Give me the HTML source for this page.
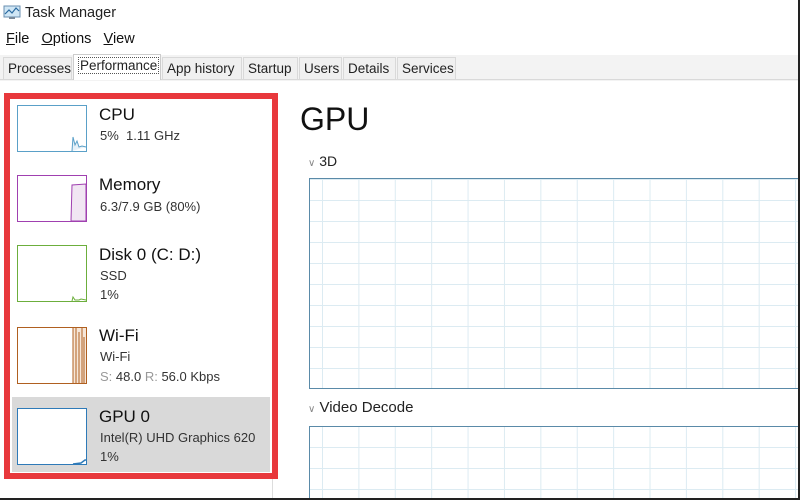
<!DOCTYPE html>
<html><head><style>
*{margin:0;padding:0;box-sizing:border-box}
html,body{width:800px;height:500px;overflow:hidden}
body{background:#fff;font-family:"Liberation Sans",sans-serif;color:#000;position:relative}
.a{position:absolute;white-space:nowrap}
.tab{position:absolute;top:57px;height:22px;font-size:13.5px;line-height:21px;border:1px solid #d9d9d9;border-bottom:none;background:#f0f0f0;padding:0 4px;color:#222}
.th{position:absolute;left:17px;width:70px;background:#fff}
.t1{font-size:17px;color:#111}
.t2{font-size:13px;color:#333}
</style></head><body>
<svg class="a" style="left:3px;top:5px" width="20" height="16"><rect x="1" y="1" width="16" height="11" fill="#cfe6f5" stroke="#6a8fb0"/><polyline points="2,9 6,5 9,8 13,3 16,6" fill="none" stroke="#2a6aa0" stroke-width="1.2"/><rect x="6" y="12" width="6" height="2" fill="#7a8a9a"/></svg>
<div class="a" style="left:25px;top:5px;font-size:14.5px;color:#222">Task Manager</div>
<div class="a" style="left:6px;top:31px;font-size:14.5px;color:#111"><u>F</u>ile&nbsp;&nbsp; <u>O</u>ptions&nbsp;&nbsp; <u>V</u>iew</div>
<div class="a" style="left:0;top:55px;width:800px;height:26px;background:#f3f3f3"></div>
<div class="a" style="left:0;top:79px;width:800px;height:1px;background:#d9d9d9"></div>
<div class="tab" style="left:3px;width:69px">Processes</div>
<div class="tab" style="left:73px;top:54px;height:26px;width:88px;background:#fff;border-color:#ccc"><span style="border:1px dotted #555;padding:0 1px">Performance</span></div>
<div class="tab" style="left:162px;width:80px">App history</div>
<div class="tab" style="left:243px;width:55px">Startup</div>
<div class="tab" style="left:299px;width:43px">Users</div>
<div class="tab" style="left:343px;width:53px">Details</div>
<div class="tab" style="left:397px;width:59px">Services</div>

<div class="a" style="left:272px;top:93px;width:1px;height:407px;background:#ddd"></div>
<div class="a" style="left:4px;top:93px;width:274px;height:386px;border:6px solid #e8383c"></div>
<div class="a" style="left:12px;top:397px;width:258px;height:75px;background:#d9d9d9"></div>

<svg class="a th" style="top:105px" width="70" height="47"><rect x=".5" y=".5" width="69" height="46" fill="#fff" stroke="#5aa0c8"/><polyline points="55,46 56,32 58,40 60,36 62,42 65,41 69,42" fill="#e6f1f8" stroke="#5aa0c8"/></svg>
<div class="a t1" style="left:99px;top:105px">CPU</div>
<div class="a t2" style="left:100px;top:128px">5%&nbsp; 1.11 GHz</div>

<svg class="a th" style="top:175px" width="70" height="47"><rect x=".5" y=".5" width="69" height="46" fill="#fff" stroke="#a040b0"/><polygon points="54,46 55,10 69,9 69,46" fill="#f1e6f3" stroke="#a040b0"/></svg>
<div class="a t1" style="left:99px;top:175px">Memory</div>
<div class="a t2" style="left:100px;top:199px">6.3/7.9 GB (80%)</div>

<svg class="a th" style="top:245px" width="70" height="57"><rect x=".5" y=".5" width="69" height="56" fill="#fff" stroke="#6cae3c"/><polyline points="55,56 56,52 58,55 62,55 64,54 69,55" fill="none" stroke="#6cae3c"/></svg>
<div class="a t1" style="left:99px;top:245px">Disk 0 (C: D:)</div>
<div class="a t2" style="left:100px;top:268px">SSD</div>
<div class="a t2" style="left:100px;top:287px">1%</div>

<svg class="a th" style="top:327px" width="70" height="57"><rect x=".5" y=".5" width="69" height="56" fill="#fff" stroke="#b06020"/><rect x="56" y="1" width="13" height="55" fill="#f6e6d8"/><path d="M56 56V1M59 56V1M62 56V5M65 56V1M67 56V10" stroke="#b06020" stroke-width="1" fill="none"/></svg>
<div class="a t1" style="left:99px;top:326px">Wi-Fi</div>
<div class="a t2" style="left:100px;top:349px">Wi-Fi</div>
<div class="a t2" style="left:100px;top:369px"><span style="color:#999">S:</span> 48.0 <span style="color:#999">R:</span> 56.0 Kbps</div>

<svg class="a th" style="top:408px" width="70" height="57"><rect x=".5" y=".5" width="69" height="56" fill="#fff" stroke="#2e7ab8"/><polyline points="56,56 64,55 68,52 69,52" fill="none" stroke="#2e7ab8" stroke-width="1.5"/></svg>
<div class="a t1" style="left:99px;top:407px">GPU 0</div>
<div class="a t2" style="left:100px;top:430px">Intel(R) UHD Graphics 620</div>
<div class="a t2" style="left:100px;top:449px">1%</div>

<div class="a" style="left:300px;top:101px;font-size:32px;color:#111">GPU</div>
<div class="a" style="left:308px;top:153px;font-size:14px;color:#222"><span style="font-size:10px;color:#888">&#8744;</span> 3D</div>
<div class="a" style="left:309px;top:178px;width:492px;height:211px;border:1px solid #5a8aa8;background-color:#fff;background-image:linear-gradient(#dcebf2 1px,transparent 1px),linear-gradient(90deg,#dcebf2 1px,transparent 1px);background-size:36.4px 21px;background-position:12px 0px"></div>
<div class="a" style="left:308px;top:399px;font-size:15px;color:#222"><span style="font-size:10px;color:#888">&#8744;</span> Video Decode</div>
<div class="a" style="left:309px;top:426px;width:492px;height:72px;border:1px solid #5a8aa8;border-bottom:none;background-color:#fff;background-image:linear-gradient(#dcebf2 1px,transparent 1px),linear-gradient(90deg,#dcebf2 1px,transparent 1px);background-size:36.4px 21px;background-position:12px 20px"></div>
<div class="a" style="left:798px;top:0;width:2px;height:500px;background:#222"></div>
<div class="a" style="left:0;top:498px;width:800px;height:2px;background:#222"></div>
</body></html>
